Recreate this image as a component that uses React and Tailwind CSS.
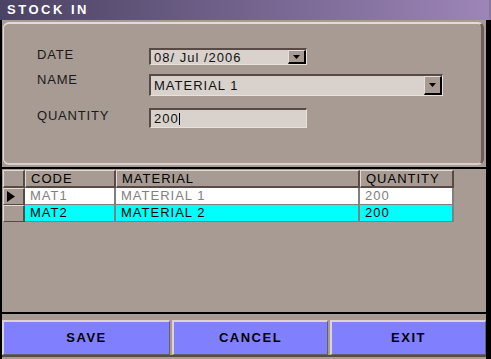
import React from 'react';

const cols = [
  { key: 'code', label: 'CODE', w: 'w-[91px]' },
  { key: 'material', label: 'MATERIAL', w: 'w-[244px]' },
  { key: 'qty', label: 'QUANTITY', w: 'w-[94px]' },
];

const rows = [
  { code: 'MAT1', material: 'MATERIAL 1', qty: '200', current: true },
  { code: 'MAT2', material: 'MATERIAL 2', qty: '200', selected: true },
];

function DropBtn() {
  return (
    <div className="w-[18px] h-full bg-[#a89b93] border-t border-l border-t-[#e6ded8] border-l-[#e6ded8] border-r-2 border-b-2 border-r-black border-b-black flex items-center justify-center">
      <svg width="7" height="4" viewBox="0 0 7 4">
        <path d="M0 0h7L3.5 4z" fill="#000" />
      </svg>
    </div>
  );
}

function Field({ w, h, children, combo }) {
  return (
    <div className={`${w} ${h} border-t-2 border-l-2 border-t-[#5a4a46] border-l-[#5a4a46] border-r border-b border-r-[#e8e2dc] border-b-[#e8e2dc] bg-[#d9d1cc] flex items-stretch`}>
      <div className="flex-1 flex items-center px-[3px] text-[13px] text-[#111] leading-none tracking-[1px]">{children}</div>
      {combo && <DropBtn />}
    </div>
  );
}

export default function App() {
  return (
    <div className="w-[491px] h-[359px] bg-[#a89b93] flex flex-col overflow-hidden" style={{ fontFamily: '"Liberation Sans", Arial, sans-serif' }}>
      {/* title */}
      <div className="h-[20px] bg-gradient-to-r from-[#4b4363] to-[#9d85b8] flex items-center pl-[7px] border-r-2 border-r-[#8a7a9a]">
        <span className="text-white font-bold text-[13px] tracking-[2.5px]">STOCK IN</span>
      </div>

      <div className="flex-1 flex flex-col border-l-2 border-black border-r-[5px] border-r-black">
        {/* form panel */}
        <div className="mt-[2px] ml-[1px] mr-[2px] h-[143px] rounded-[6px] border-t-2 border-l border-t-[#e3dbd4] border-l-[#e3dbd4] border-r-[3px] border-b-2 border-r-[#6f5f5a] border-b-[#d9d0c9] pl-[33px] pt-[24px]">
          <div className="flex items-start">
            <div className="w-[112px] text-[13px] text-[#1a1a1a] tracking-[0.8px] -mt-[3px]">DATE</div>
            <Field w="w-[158px]" h="h-[17px]" combo>08/ Jul /2006</Field>
          </div>
          <div className="flex items-start mt-[9px]">
            <div className="w-[112px] text-[13px] text-[#1a1a1a] tracking-[0.8px] -mt-[4px]">NAME</div>
            <Field w="w-[294px]" h="h-[22px]" combo>MATERIAL 1</Field>
          </div>
          <div className="flex items-start mt-[12px]">
            <div className="w-[112px] text-[13px] text-[#1a1a1a] tracking-[0.8px] -mt-[2px]">QUANTITY</div>
            <Field w="w-[158px]" h="h-[20px]">
              200<span className="inline-block w-px h-[12px] bg-black" />
            </Field>
          </div>
        </div>

        {/* grid */}
        <div className="mt-[2px] h-[147px] border-t-2 border-b-2 border-black flex flex-col pl-[1px]">
          <div className="flex h-[18px] mt-[1px]">
            <div className="w-[22px] bg-[#a89b93] border-t border-l border-[#e3dbd4] border-r-2 border-b-2 border-r-[#5a4a46] border-b-[#5a4a46]" />
            {cols.map(c => (
              <div key={c.key} className={`${c.w} bg-[#a89b93] border-t border-l border-t-[#e3dbd4] border-l-[#e3dbd4] border-r-2 border-b-2 border-r-[#5a4a46] border-b-[#5a4a46] text-[13px] text-black pl-[5px] leading-[15px] tracking-[1px]`}>
                {c.label}
              </div>
            ))}
            <div className="w-[1px]" />
          </div>
          {rows.map((r, i) => (
            <div key={i} className="flex h-[17px]">
              <div className="w-[22px] border-t border-l border-t-[#e3dbd4] border-l-[#e3dbd4] border-r-2 border-b border-r-[#5a4a46] border-b-[#5a4a46] flex items-center pl-[3px]">
                {r.current && (
                  <svg width="8" height="11" viewBox="0 0 8 11"><path d="M0 0L8 5.5L0 11z" fill="#000" /></svg>
                )}
              </div>
              {cols.map(c => (
                <div key={c.key} className={`${c.w} ${r.selected ? 'bg-[#00ffff] text-black' : 'bg-white text-[#808080]'} border-r-2 border-b border-[#808080] text-[13px] pl-[5px] leading-[16px] tracking-[1px]`}>
                  {r[c.key]}
                </div>
              ))}
            </div>
          ))}
        </div>

        {/* buttons */}
        <div className="mt-[6px] flex h-[37px] border-b-2 border-[#5a4a46] mb-[2px]">
          {['SAVE', 'CANCEL', 'EXIT'].map((b, i) => (
            <button key={b} className={`${i === 0 ? 'w-[168px]' : i === 1 ? 'w-[156px]' : 'flex-1'} ${i > 0 ? 'ml-[2px]' : ''} bg-[#8080ff] border-t-2 border-l-2 border-t-[#ddd5cd] border-l-[#ddd5cd] border-r border-b border-r-[#6a5e66] border-b-[#6a5e66] text-[13px] font-bold text-black tracking-[1.5px]`}>
              {b}
            </button>
          ))}
        </div>
      </div>
    </div>
  );
}
